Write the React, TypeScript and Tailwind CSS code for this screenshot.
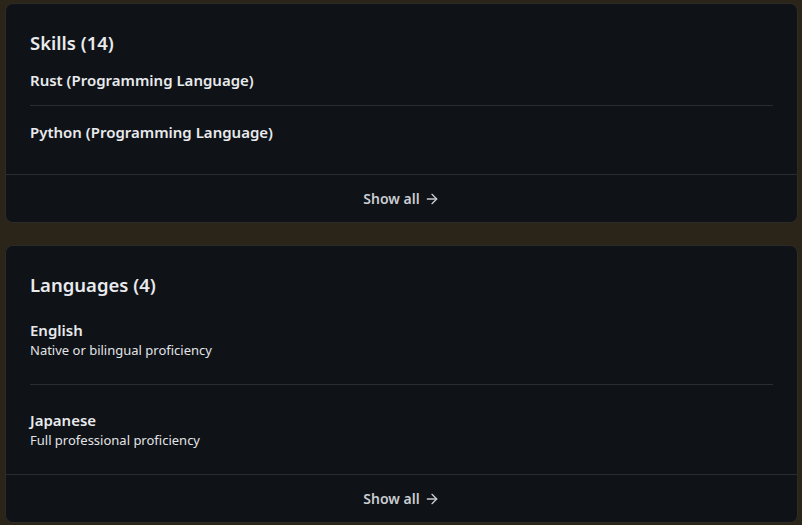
import { ArrowRight } from 'lucide-react'

type Item = { name: string; detail?: string }

function Card({
  title,
  items,
  itemPadTop,
  itemPadBottom,
  lastPadBottom,
}: {
  title: string
  items: Item[]
  itemPadTop: string[]
  itemPadBottom: string
  lastPadBottom: string
}) {
  return (
    <section className="rounded-lg border border-[#2c2b27] bg-[#0f1216] overflow-hidden">
      <div className="px-6 pt-[25px]">
        <h2 className="text-[18.5px] leading-[28px] font-semibold text-[#e8eaed]">{title}</h2>
        <ul>
          {items.map((item, i) => {
            const last = i === items.length - 1
            return (
              <li
                key={item.name}
                className={`${itemPadTop[i]} ${last ? lastPadBottom : `${itemPadBottom} border-b border-[#2a2d31]`}`}
              >
                <div className="text-[15px] leading-[20px] font-semibold text-[#e8eaed]">{item.name}</div>
                {item.detail && (
                  <div className="text-[13px] leading-[20px] text-[#e2e4e7]">{item.detail}</div>
                )}
              </li>
            )
          })}
        </ul>
      </div>
      <div className="border-t border-[#2a2d31] h-[48px] flex items-center justify-center gap-1 text-[14px] font-semibold text-[#c9ccd1]">
        <span>Show all</span>
        <ArrowRight className="h-[16px] w-[16px]" strokeWidth={2} />
      </div>
    </section>
  )
}

export default function App() {
  return (
    <div
      className="min-h-[525px] bg-[#2b2418] pt-[3px] pl-[5px] pr-[4px] flex flex-col gap-[22px]"
      style={{ fontFamily: '"Noto Sans", "Open Sans", sans-serif' }}
    >
      <Card
        title="Skills (14)"
        itemPadTop={['pt-[13px]', 'pt-[16px]']}
        itemPadBottom="pb-[15px]"
        lastPadBottom="pb-[32px]"
        items={[{ name: 'Rust (Programming Language)' }, { name: 'Python (Programming Language)' }]}
      />
      <Card
        title="Languages (4)"
        itemPadTop={['pt-[21px]', 'pt-[25px]']}
        itemPadBottom="pb-[24px]"
        lastPadBottom="pb-[24px]"
        items={[
          { name: 'English', detail: 'Native or bilingual proficiency' },
          { name: 'Japanese', detail: 'Full professional proficiency' },
        ]}
      />
    </div>
  )
}
